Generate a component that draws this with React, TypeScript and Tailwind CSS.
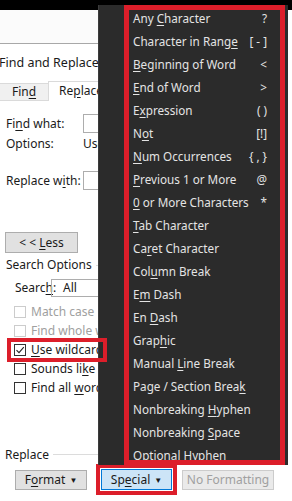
import React from "react"

const U: React.FC<{ children: React.ReactNode }> = ({ children }) => (
  <span className="underline underline-offset-2">{children}</span>
)

type Item = { pre: string; key: string; post: string; code?: string }

const items: Item[] = [
  { pre: "Any ", key: "C", post: "haracter", code: "?" },
  { pre: "Character in Rang", key: "e", post: "", code: "[ - ]" },
  { pre: "", key: "B", post: "eginning of Word", code: "<" },
  { pre: "", key: "E", post: "nd of Word", code: ">" },
  { pre: "E", key: "x", post: "pression", code: "( )" },
  { pre: "N", key: "o", post: "t", code: "[!]" },
  { pre: "", key: "N", post: "um Occurrences", code: "{ , }" },
  { pre: "", key: "P", post: "revious 1 or More", code: "@" },
  { pre: "", key: "0", post: " or More Characters", code: "*" },
  { pre: "", key: "T", post: "ab Character" },
  { pre: "Ca", key: "r", post: "et Character" },
  { pre: "Col", key: "u", post: "mn Break" },
  { pre: "E", key: "m", post: " Dash" },
  { pre: "En ", key: "D", post: "ash" },
  { pre: "Grap", key: "h", post: "ic" },
  { pre: "Manual ", key: "L", post: "ine Break" },
  { pre: "Page / Section Brea", key: "k", post: "" },
  { pre: "Nonbreaking ", key: "H", post: "yphen" },
  { pre: "Nonbreaking ", key: "S", post: "pace" },
  { pre: "Optional H", key: "y", post: "phen" },
]

const Check: React.FC<{ checked?: boolean; disabled?: boolean; children: React.ReactNode }> = ({
  checked,
  disabled,
  children,
}) => (
  <div className="flex items-center h-[19px] pl-[14px] gap-[5px]">
    <div
      className={
        "shrink-0 w-[12px] h-[12px] border bg-white flex items-center justify-center " +
        (disabled ? "border-[#cccccc]" : "border-[#333333]")
      }
    >
      {checked && (
        <svg width="10" height="10" viewBox="0 0 10 10">
          <path d="M1.5 5.2 L4 7.6 L8.8 2.2" fill="none" stroke="#222" strokeWidth="1.1" />
        </svg>
      )}
    </div>
    <span className={"whitespace-nowrap " + (disabled ? "text-[#a0a0a0]" : "text-[#1a1a1a]")}>{children}</span>
  </div>
)

export default function App() {
  return (
    <div
      className="relative w-[292px] h-[501px] overflow-hidden bg-white text-[12px] text-[#1a1a1a]"
      style={{ fontFamily: '"Noto Sans", "Liberation Sans", sans-serif' }}
    >
      <div className="h-[10px] bg-black" />

      {/* dialog part left of the menu */}
      <div className="w-[98px] overflow-hidden flex flex-col">
        <div className="h-[34px] bg-[#fbfbfb] border-b border-[#a8a8a8]" />
        <div className="h-[38px] flex items-center -ml-[1px] text-[12.5px] whitespace-nowrap">Find and Replace</div>
        <div className="h-[19px] flex items-end border-b border-[#dadada]">
          <div className="shrink-0 w-[48px] h-[17px] bg-[#f0f0f0] border-t border-[#dadada] flex items-center justify-center">
            <span>
              Fin<U>d</U>
            </span>
          </div>
          <div className="shrink-0 h-[20px] -mb-[1px] pl-[10px] pr-[20px] bg-white border border-b-0 border-[#dadada]">
            Re<U>p</U>lace
          </div>
        </div>
        <div className="h-[13px]" />
        <div className="flex items-center h-[19px]">
          <span className="shrink-0 w-[83px] pl-[6px] whitespace-nowrap">
            Fi<U>n</U>d what:
          </span>
          <div className="shrink-0 w-[40px] h-[19px] border border-[#adadad]" />
        </div>
        <div className="flex items-center h-[20px] mt-[1px] whitespace-nowrap">
          <span className="shrink-0 w-[83px] pl-[6px]">Options:</span>
          <span>Use wildcards</span>
        </div>
        <div className="h-[17px]" />
        <div className="flex items-center h-[19px]">
          <span className="shrink-0 w-[83px] pl-[6px] whitespace-nowrap">
            Replace w<U>i</U>th:
          </span>
          <div className="shrink-0 w-[40px] h-[19px] border border-[#adadad]" />
        </div>
        <div className="h-[42px]" />
        <div className="ml-[5px] w-[73px] h-[21px] bg-[#e1e1e1] border border-[#adadad] flex items-center justify-center">
          <span>
            &lt; &lt; <U>L</U>ess
          </span>
        </div>
        <div className="flex items-center h-[24px] pl-[6px] gap-[4px]">
          <span className="whitespace-nowrap">Search Options</span>
          <div className="flex-1 h-px bg-[#dcdcdc]" />
        </div>
        <div className="flex items-center h-[20px] pl-[15px] mt-[1px]">
          <span className="shrink-0 w-[36px]">
            Searc<U>h</U>:
          </span>
          <div className="shrink-0 w-[60px] h-[18px] border border-[#adadad] flex items-center pl-[11px]">All</div>
        </div>
        <div className="h-[4px]" />
        <Check disabled>Match case</Check>
        <Check disabled>Find whole words only</Check>
        <Check checked>
          <U>U</U>se wildcards
        </Check>
        <Check>
          Sounds li<U>k</U>e (English)
        </Check>
        <Check>
          Find all <U>w</U>ord forms (English)
        </Check>
        <div className="h-[48px]" />
        <div className="flex items-center h-[19px] pl-[5px] gap-[4px]">
          <span>Replace</span>
          <div className="flex-1 h-px bg-[#dcdcdc]" />
        </div>
      </div>

      {/* bottom buttons */}
      <div className="flex items-center h-[31px] pl-[15px]">
        <div className="w-[72px] h-[20px] bg-[#e1e1e1] border border-[#adadad] flex items-center justify-center gap-[4px]">
          <span>
            F<U>o</U>rmat
          </span>
          <span className="text-[8px]">▼</span>
        </div>
        <div className="ml-[9px] w-[81px] h-[31px] border-[4px] border-[#dc1e2a] flex items-center justify-center p-[1px]">
          <div className="w-full h-full bg-[#cce4f7] border border-[#0078d7] flex items-center justify-center gap-[4px]">
            <span>
              Sp<U>e</U>cial
            </span>
            <span className="text-[8px]">▼</span>
          </div>
        </div>
        <div className="ml-[5px] w-[92px] h-[20px] bg-[#eaeaea] border border-[#cccccc] text-[#a0a0a0] flex items-center justify-center">
          No Formatting
        </div>
      </div>

      {/* special characters menu */}
      <div className="absolute left-[98px] top-[5px] w-[190px] h-[460px] bg-[#2b2b2b] border-l border-[#3c3c3c]">
        <div className="absolute left-[25px] top-0 w-[161px] h-[460px] border-[5px] border-[#dc1e2a]" />
        <div className="flex flex-col pt-[2px] pl-[34px] pr-[21px] text-[#e4e4e4] text-[11.7px]">
          {items.map((it, i) => (
            <div key={i} className="flex items-center justify-between h-[23px] whitespace-nowrap">
              <span>
                {it.pre}
                <U>{it.key}</U>
                {it.post}
              </span>
              {it.code && <span>{it.code}</span>}
            </div>
          ))}
        </div>
      </div>

      {/* annotation around "Use wildcards" */}
      <div className="absolute left-[7px] top-[338px] w-[100px] h-[24px] border-[4px] border-[#dc1e2a]" />
    </div>
  )
}
